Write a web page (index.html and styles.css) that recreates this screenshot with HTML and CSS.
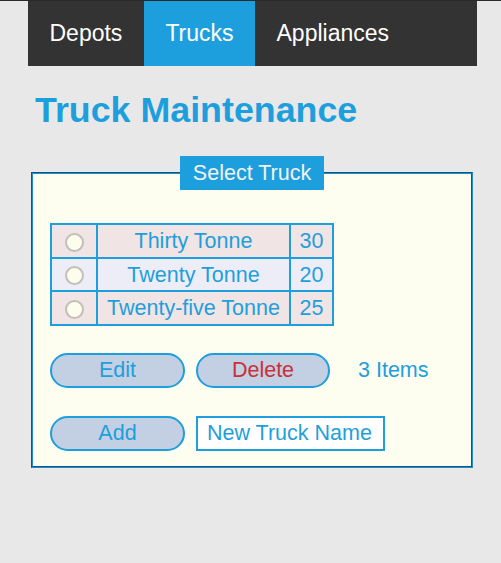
FILE: index.html
```html
<!DOCTYPE html>
<html>
<head>
<meta charset="utf-8">
<link rel="stylesheet" href="styles.css">
</head>
<body>
<div class="page">
  <nav class="nav">
    <a class="tab">Depots</a>
    <a class="tab active">Trucks</a>
    <a class="tab">Appliances</a>
  </nav>
  <h1 class="title">Truck Maintenance</h1>
  <fieldset class="panel">
    <legend class="legend">Select Truck</legend>
    <table class="trucks">
      <tr class="odd"><td class="sel"><input type="radio" name="t" class="radio"></td><td class="name">Thirty Tonne</td><td class="num">30</td></tr>
      <tr class="even"><td class="sel"><input type="radio" name="t" class="radio"></td><td class="name">Twenty Tonne</td><td class="num">20</td></tr>
      <tr class="odd"><td class="sel"><input type="radio" name="t" class="radio"></td><td class="name">Twenty-five Tonne</td><td class="num">25</td></tr>
    </table>
    <div class="row row-actions">
      <button class="btn">Edit</button>
      <button class="btn btn-delete">Delete</button>
      <span class="count">3 Items</span>
    </div>
    <div class="row row-add">
      <button class="btn">Add</button>
      <input class="field" type="text" value="New Truck Name">
    </div>
  </fieldset>
</div>
</body>
</html>
```

FILE: styles.css
```css
html, body {
  margin: 0;
  padding: 0;
}
body {
  background: #e8e8e8;
  border-top: 1px solid #2a2a2a;
  font-family: "Liberation Sans", Arial, sans-serif;
  color: #1e9fdd;
}
.page {
  margin-left: 28px;
  width: 449px;
}
.nav {
  display: flex;
  background: #333333;
  height: 65px;
}
.tab {
  display: flex;
  align-items: center;
  padding: 0 21.5px;
  font-size: 23px;
  color: #ffffff;
}
.tab.active {
  background: #1e9fdd;
}
.title {
  margin: 24px 0 0 7px;
  font-size: 35.8px;
  font-weight: bold;
  line-height: 40px;
  color: #1e9fdd;
}
.panel {
  margin: 26px 0 0 3px;
  width: 442px;
  box-sizing: border-box;
  border: 2px groove #1e8fcf;
  background: #fdfdf0;
  padding: 33px 17px 15px;
  font-size: 21.5px;
}
.legend {
  margin: 0 auto;
  background: #1e9fdd;
  color: #f2f2f2;
  padding: 5px 13px;
  line-height: 24px;
}
.trucks {
  border-collapse: collapse;
}
.trucks td {
  border: 2px solid #1e9fdd;
  padding: 4px 8.5px 3.6px;
  text-align: center;
  line-height: 24px;
}
.trucks td.sel {
  padding: 3px 12px 0 13px;
  width: 19px;
}
.trucks tr.odd td {
  background: #f0e4e4;
}
.trucks tr.even td {
  background: #ecedf7;
}
.trucks td.name {
  width: 174px;
}
.radio {
  appearance: none;
  -webkit-appearance: none;
  display: block;
  margin: 0;
  width: 19px;
  height: 19px;
  box-sizing: border-box;
  border: 2px solid #c2beb8;
  border-radius: 50%;
  background: #fdfdee;
}
.row {
  display: flex;
  align-items: center;
  gap: 11px;
}
.row-actions {
  margin-top: 27px;
}
.row-add {
  margin-top: 28px;
}
.btn {
  width: 135px;
  height: 35px;
  box-sizing: border-box;
  border: 2px solid #1e9fdd;
  border-radius: 18px;
  background: #c3cfe2;
  color: #1e9fdd;
  font-family: "Liberation Sans", Arial, sans-serif;
  font-size: 21.5px;
  padding: 0;
}
.btn-delete {
  width: 134px;
  color: #c8323a;
}
.count {
  margin-left: 17px;
}
.field {
  width: 189px;
  height: 35px;
  box-sizing: border-box;
  border: 2px solid #1e9fdd;
  background: #ffffff;
  color: #1e9fdd;
  font-family: "Liberation Sans", Arial, sans-serif;
  font-size: 21.5px;
  padding: 0 0 0 9px;
  outline: none;
}
```
